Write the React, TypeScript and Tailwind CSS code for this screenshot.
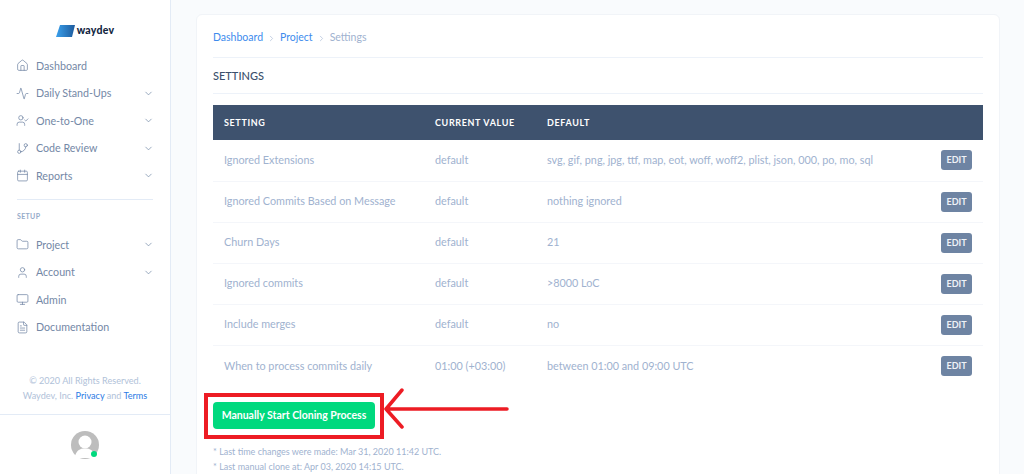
import { Home, Activity, UserCheck, GitBranch, Calendar, ChevronDown, ChevronRight, Folder, User, Monitor, FileText } from 'lucide-react';

const mainNav = [
  { label: 'Dashboard', icon: Home, arrow: false },
  { label: 'Daily Stand-Ups', icon: Activity, arrow: true },
  { label: 'One-to-One', icon: UserCheck, arrow: true },
  { label: 'Code Review', icon: GitBranch, arrow: true },
  { label: 'Reports', icon: Calendar, arrow: true },
];

const setupNav = [
  { label: 'Project', icon: Folder, arrow: true },
  { label: 'Account', icon: User, arrow: true },
  { label: 'Admin', icon: Monitor, arrow: false },
  { label: 'Documentation', icon: FileText, arrow: false },
];

const rows = [
  ['Ignored Extensions', 'default', 'svg, gif, png, jpg, ttf, map, eot, woff, woff2, plist, json, 000, po, mo, sql'],
  ['Ignored Commits Based on Message', 'default', 'nothing ignored'],
  ['Churn Days', 'default', '21'],
  ['Ignored commits', 'default', '>8000 LoC'],
  ['Include merges', 'default', 'no'],
  ['When to process commits daily', '01:00 (+03:00)', 'between 01:00 and 09:00 UTC'],
];

function NavItem({ item }: { item: (typeof mainNav)[number] }) {
  const Icon = item.icon;
  return (
    <div className="h-[27.5px] flex items-center pl-[16px] pr-[16px] text-[10.7px] text-[#7488a6]">
      <Icon size={13} strokeWidth={1.4} className="mr-[7px] shrink-0" />
      <span className="flex-1">{item.label}</span>
      {item.arrow && <ChevronDown size={11} strokeWidth={1.5} className="text-[#6e84a3]" />}
    </div>
  );
}

export default function App() {
  return (
    <div className="h-[474px] w-[1024px] overflow-hidden flex bg-[#f9fbfd] font-['Lato',sans-serif]">
      {/* Sidebar */}
      <aside className="w-[171px] h-full shrink-0 bg-white border-r border-[#e3ebf6] flex flex-col">
        <div className="h-[52px] pt-[25px] flex justify-center">
          <div className="flex items-center gap-[2px] h-[12px]">
            <svg width="19" height="12" viewBox="0 0 19 12">
              <defs>
                <linearGradient id="logo" x1="0" x2="1" y1="0" y2="0">
                  <stop offset="0" stopColor="#3aa0ec" />
                  <stop offset="1" stopColor="#1d5a9c" />
                </linearGradient>
              </defs>
              <path d="M4 0 H19 L16 12 H0 Z" fill="url(#logo)" />
            </svg>
            <span className="text-[10.5px] font-black text-[#12263f] tracking-wide">waydev</span>
          </div>
        </div>
        <nav>
          {mainNav.map((item) => (
            <NavItem key={item.label} item={item} />
          ))}
        </nav>
        <div className="mx-[17px] mt-[9px] border-t border-[#e3ebf6]" />
        <div className="mt-[11px] mb-[10px] px-[17px] text-[7px] font-bold tracking-wider text-[#95aac9]">SETUP</div>
        <nav>
          {setupNav.map((item) => (
            <NavItem key={item.label} item={item} />
          ))}
        </nav>
        <div className="mt-[32px] text-center text-[9.1px] leading-[15px] text-[#b1c2d9]">
          <div>© 2020 All Rights Reserved.</div>
          <div>
            Waydev, Inc. <span className="text-[#2c7be5]">Privacy</span> and <span className="text-[#2c7be5]">Terms</span>
          </div>
        </div>
        <div className="mt-[11px] flex-1 border-t border-[#e3ebf6] flex justify-center pt-[16px]">
          <div className="relative w-[28px] h-[28px]">
            <svg width="28" height="28" viewBox="0 0 28 28">
              <circle cx="14" cy="14" r="14" fill="#bdbdbd" />
              <circle cx="14" cy="11" r="6.5" fill="white" />
              <path d="M3.5 27 C5 19 9 17.5 14 17.5 C19 17.5 23 19 24.5 27 Z" fill="white" />
            </svg>
            <span className="absolute right-[2px] bottom-[2px] w-[6px] h-[6px] rounded-full bg-[#00d97e]" />
          </div>
        </div>
      </aside>

      {/* Main */}
      <main className="flex-1 pl-[25px] pr-[24px] pt-[14px] min-w-0">
        <div className="relative bg-white rounded-[6px] border border-[#f1f4f8] px-[16px] h-[520px]">
          <div className="h-[43px] pt-[4px] flex items-center border-b border-[#edf2f9] text-[10.5px] text-[#3d8bed]">
            <span>Dashboard</span>
            <ChevronRight size={9} className="mx-[4px] text-[#b1c2d9]" />
            <span>Project</span>
            <ChevronRight size={9} className="mx-[4px] text-[#b1c2d9]" />
            <span className="text-[#a0b2cf]">Settings</span>
          </div>
          <div className="h-[36px] pt-[2px] flex items-center border-b border-[#edf2f9] text-[11px] font-medium text-[#3b506c]">SETTINGS</div>

          <table className="mt-[11px] w-full table-fixed text-[10.8px] text-[#a0b2cf]">
            <thead>
              <tr className="h-[35px] bg-[#3e526e] text-white text-[9px] font-bold tracking-[0.07em] text-left">
                <th className="w-[222px] pl-[11px] font-bold">SETTING</th>
                <th className="w-[112px] font-bold">CURRENT VALUE</th>
                <th className="font-bold">DEFAULT</th>
                <th className="w-[53px]" />
              </tr>
            </thead>
            <tbody>
              {rows.map((row) => (
                <tr key={row[0]} className="h-[41px] border-b border-[#f4f6fa] last:border-b-0">
                  <td className="pl-[11px]">{row[0]}</td>
                  <td>{row[1]}</td>
                  <td>{row[2]}</td>
                  <td>
                    <span className="block w-[31px] h-[20px] ml-[11px] rounded-[3px] bg-[#6e84a3] text-[#eef2f7] text-[9px] font-bold leading-[20px] text-center">EDIT</span>
                  </td>
                </tr>
              ))}
            </tbody>
          </table>

          <button className="mt-[16px] block w-[162px] h-[27px] rounded-[4px] bg-[#00d97e] text-white text-[10.5px] font-bold">
            Manually Start Cloning Process
          </button>
          <div className="mt-[15px] text-[9px] leading-[15px] text-[#a0b2cf]">
            <div>* Last time changes were made: Mar 31, 2020 11:42 UTC.</div>
            <div>* Last manual clone at: Apr 03, 2020 14:15 UTC.</div>
          </div>

          {/* Red annotation over the button */}
          <div className="absolute left-[7px] top-[378px] w-[180px] h-[46px] border-[4px] border-[#ed1c24]" />
          <svg className="absolute left-[187px] top-[367px]" width="126" height="54" viewBox="0 0 126 54">
            <path d="M2 27 H123 M2 27 L18 8 M2 27 L18 45" stroke="#ed1c24" strokeWidth="3.5" strokeLinecap="round" fill="none" />
          </svg>
        </div>
      </main>
    </div>
  );
}
